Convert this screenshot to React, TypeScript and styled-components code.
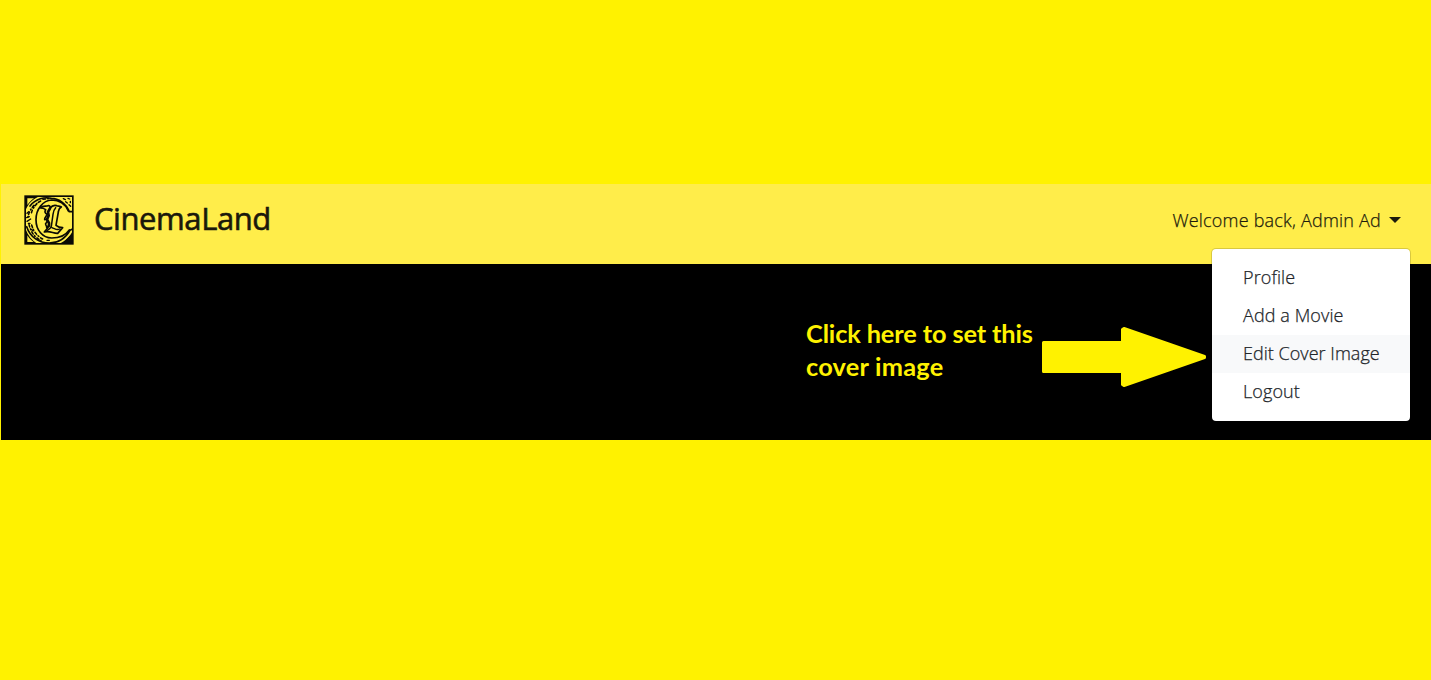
import React from "react";
import styled, { createGlobalStyle } from "styled-components";

const GlobalStyle = createGlobalStyle`
  * { box-sizing: border-box; }
  body { margin: 0; background: #fff200; }
`;

const Page = styled.div`
  height: 680px;
  padding: 184px 0 0 1px;
  background: #fff200;
  font-family: Lato, "Open Sans", sans-serif;
  overflow: hidden;
`;

const Navbar = styled.header`
  display: flex;
  justify-content: space-between;
  height: 80px;
  padding: 11px 30px 0 23px;
  background: #ffed4a;
`;

const Brand = styled.div`
  display: flex;
  gap: 20px;
`;

const BrandName = styled.span`
  font-family: "Open Sans", sans-serif;
  font-size: 31px;
  font-weight: 500;
  line-height: 46px;
  letter-spacing: -0.42px;
  white-space: nowrap;
  color: #1a180b;
  -webkit-text-stroke: 0.6px #1a180b;
`;

const UserMenu = styled.div`
  position: relative;
  height: 53px;
`;

const Toggle = styled.div`
  display: flex;
  align-items: center;
  height: 50px;
  color: #1c1b0c;
  cursor: pointer;
`;

const Label = styled.span<{ $spacing?: number }>`
  font-family: "Open Sans", sans-serif;
  font-size: 18px;
  font-weight: 300;
  letter-spacing: ${(p) => p.$spacing ?? 0}px;
  white-space: nowrap;
  -webkit-text-stroke: 0.25px currentColor;
`;

const Caret = styled.span`
  margin: -1px 0 0 8px;
  border: 6px solid transparent;
  border-top-color: #1c1b0c;
  border-bottom: 0;
`;

const Menu = styled.nav`
  position: absolute;
  top: 53px;
  right: -10px;
  width: 200px;
  padding: 10px 0 10px;
  border: 1px solid rgba(0, 0, 0, 0.15);
  border-radius: 5px;
  background: #fff;
  background-clip: padding-box;
`;

const MenuItem = styled.a<{ $active?: boolean }>`
  display: flex;
  align-items: center;
  height: 38px;
  padding: 0 0 2px 31px;
  color: #212529;
  background: ${(p) => (p.$active ? "#f8f9fa" : "#fff")};
`;

const Cover = styled.main`
  display: flex;
  justify-content: flex-end;
  height: 176px;
  padding: 53px 225px 0 0;
  background: #000;
`;

const Callout = styled.p`
  width: 235px;
  margin: 0;
  font-size: 25.3px;
  font-weight: 700;
  line-height: 33px;
  white-space: nowrap;
  color: #fff200;
`;

const CalloutLine = styled.span<{ $spacing: number }>`
  display: block;
  letter-spacing: ${(p) => p.$spacing}px;
`;

const Arrow = styled.svg`
  display: block;
  width: 165px;
  height: 62px;
  margin-top: 9px;
`;

const LogoArt = styled.svg`
  display: block;
  width: 50px;
  height: 50px;
`;

const INK = "#0b0a04";

function Logo() {
  return (
    <LogoArt viewBox="0 0 150 150" fill="none" stroke={INK} strokeLinecap="round">
      <path d="M5 5H43C24 14 12 27 5 45ZM5 103C12 122 24 137 40 146H5ZM146 107V146H105C124 138 138 125 146 107Z" fill={INK} stroke="none" />
      <path d="M10 10H30C21 16 15 23 10 30ZM10 121C15 130 21 136 29 141H10Z" fill="#ffed4a" stroke="none" />
      <rect x="3.500" y="3.500" width="143" height="143" strokeWidth="5" strokeLinecap="butt" />
      <path d="M144 50H136C126 25 103 10 82 10C62 5 35 11 18 33M8 95C18 125 44 144 76 144C103 144 122 134 138 106L144 103" strokeWidth="5" />
      <path d="M133 48C123 25 103 15 83 15C57 16 36 42 36 74C36 106 56 128 83 129C108 129 125 121 136 105" strokeWidth="5" />
      <path d="M30 31C18 44 14 55 12 66M39 26C29 36 24 46 22 55M50 18C42 22 37 26 34 31M15 88C20 111 32 127 51 137M23 90C29 110 38 122 56 132M57 13L78 10" strokeWidth="4.5" strokeDasharray="8 6 3 7" />
      <path d="M9 55L14 50M8 68L16 65M9 79L20 72M13 85H18M22 103L27 108M118 11L124 14M132 10L137 12M139 19V23M125 20L130 24M135 29L140 34M128 135L139 124M69 136H76" strokeWidth="4" />
      <path
        d="M49 39C55 31 63 34 69 33C77 30 80 34 78 40C83 33 91 30 98 32C104 34 108 33 112 36C105 39 104 44 103 51L96 91C102 96 108 98 116 98L101 115C88 116 78 106 61 111C67 103 73 99 75 91L68 97C69 91 60 89 67 83C73 77 70 72 62 74C61 67 69 63 70 57C63 57 61 50 65 44C60 40 55 39 49 39Z"
        fill="#ffed4a"
        strokeWidth="5"
        strokeLinejoin="round"
      />
      <path d="M78 40L72 51L74 62L69 73L75 84L75 92" strokeWidth="8" />
      <path d="M95 38C89 44 88 50 87 58L82 94C80 100 73 105 69 107M84 98C92 100 98 108 107 102" strokeWidth="4.5" />
    </LogoArt>
  );
}

const entries = [
  { text: "Profile", spacing: 0.1 },
  { text: "Add a Movie", spacing: 0.1 },
  { text: "Edit Cover Image", spacing: 0.03, active: true },
  { text: "Logout", spacing: 0.1 },
];

export default function App() {
  return (
    <>
      <GlobalStyle />
      <Page>
        <Navbar>
          <Brand>
            <Logo />
            <BrandName>CinemaLand</BrandName>
          </Brand>
          <UserMenu>
            <Toggle>
              <Label $spacing={0.21}>Welcome back, Admin Ad</Label>
              <Caret />
            </Toggle>
            <Menu>
              {entries.map((e) => (
                <MenuItem key={e.text} $active={e.active}>
                  <Label $spacing={e.spacing}>{e.text}</Label>
                </MenuItem>
              ))}
            </Menu>
          </UserMenu>
        </Navbar>
        <Cover>
          <Callout>
            <CalloutLine $spacing={-0.1}>Click here to set this</CalloutLine>
            <CalloutLine $spacing={0.25}>cover image</CalloutLine>
          </Callout>
          <Arrow viewBox="0 0 165 62">
            <path
              d="M2.500 16.500H81.500V3.500L83 2.500L163.500 30.500V31.500L83 59.500L81.500 58.500V45.500H2.500Z"
              fill="#fff200"
              stroke="#fff200"
              strokeWidth="3"
              strokeLinejoin="round"
            />
          </Arrow>
        </Cover>
      </Page>
    </>
  );
}
